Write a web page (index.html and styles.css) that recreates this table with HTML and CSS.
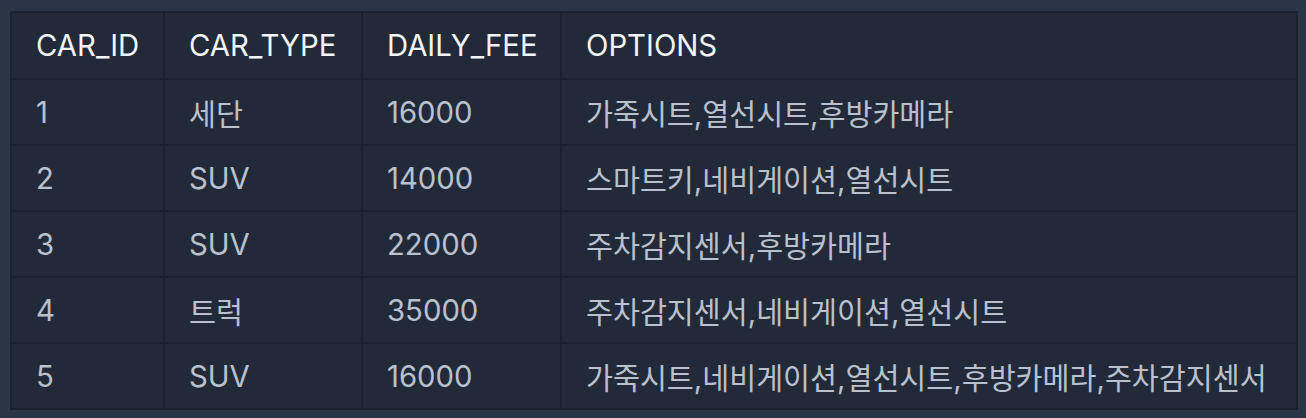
FILE: index.html
```html
<!DOCTYPE html>
<html lang="ko">
<head>
<meta charset="utf-8">
<link rel="stylesheet" href="styles.css">
</head>
<body>
<div class="wrap">
<table class="grid">
<colgroup>
<col class="c1"><col class="c2"><col class="c3"><col>
</colgroup>
<thead>
<tr><th>CAR_ID</th><th>CAR_TYPE</th><th>DAILY_FEE</th><th>OPTIONS</th></tr>
</thead>
<tbody>
<tr><td>1</td><td>세단</td><td>16000</td><td>가죽시트,열선시트,후방카메라</td></tr>
<tr><td>2</td><td>SUV</td><td>14000</td><td>스마트키,네비게이션,열선시트</td></tr>
<tr><td>3</td><td>SUV</td><td>22000</td><td>주차감지센서,후방카메라</td></tr>
<tr><td>4</td><td>트럭</td><td>35000</td><td>주차감지센서,네비게이션,열선시트</td></tr>
<tr><td>5</td><td>SUV</td><td>16000</td><td>가죽시트,네비게이션,열선시트,후방카메라,주차감지센서</td></tr>
</tbody>
</table>
</div>
</body>
</html>
```

FILE: styles.css
```css
html, body {
  margin: 0;
  padding: 0;
  background: #2a3647;
}
.wrap {
  padding: 11px 8px 9px 10px;
}
.grid {
  width: 100%;
  border-collapse: collapse;
  table-layout: fixed;
  background: #222a3a;
  border: 2px solid #1a2130;
  font-family: Inter, "Noto Sans CJK KR", sans-serif;
  font-size: 29.3px;
}
.c1 { width: 153px; }
.c2 { width: 198px; }
.c3 { width: 199px; }
.grid th, .grid td {
  border: 2px solid #1a2130;
  text-align: left;
  padding: 0 24px;
  height: 66px;
  white-space: nowrap;
  box-sizing: border-box;
}
.grid th {
  color: #f2f4f7;
  font-weight: 400;
  height: 67px;
}
.grid td {
  color: #b9c1cd;
}
```
